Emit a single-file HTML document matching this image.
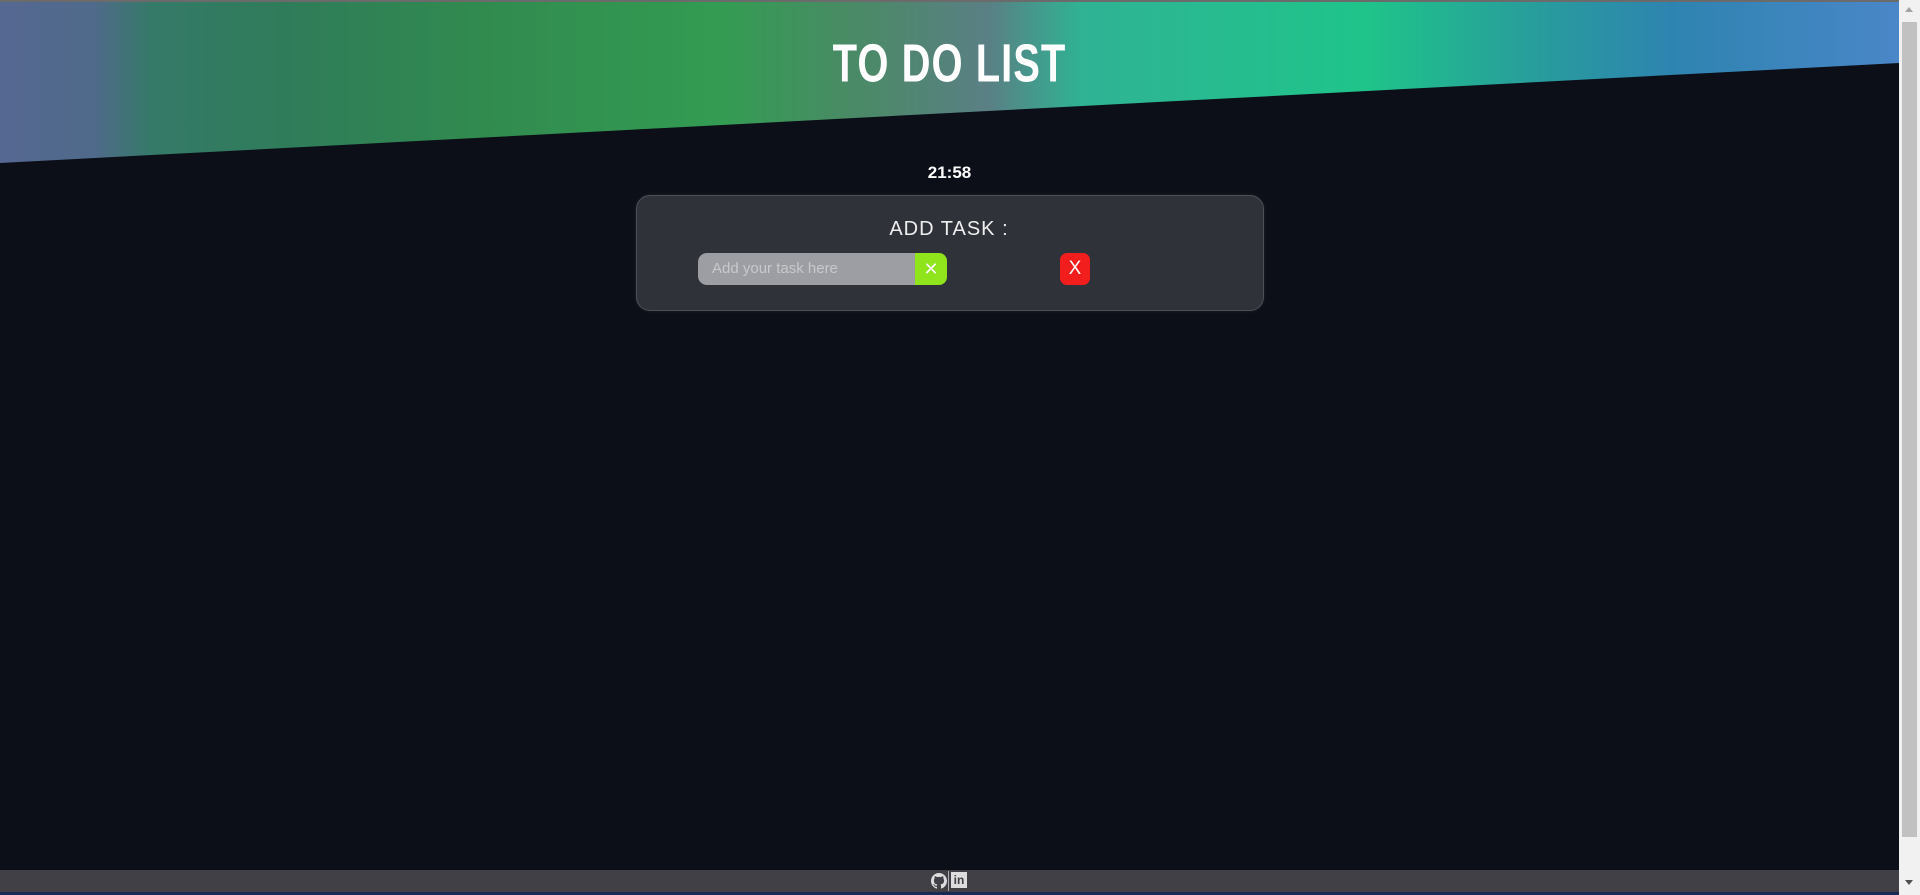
<!DOCTYPE html>
<html><head><style>
html,body{margin:0;padding:0;width:1920px;height:895px;overflow:hidden;background:#0c0f18;font-family:"Liberation Sans",sans-serif}
.hdr{position:absolute;left:0;top:0;width:1899px;height:170px;
background:linear-gradient(90deg,#556892 0%,#4f6a8a 5%,#357a68 8%,#2f7c5a 15%,#318a4f 25%,#339c52 38%,#4a8a66 45%,#5a7f84 52%,#2fb394 57%,#1fc48a 72%,#27a09a 80%,#2e84b0 88%,#4a86c8 100%);
clip-path:polygon(0 0,100% 0,100% 63px,0 163px)}
.topline{position:absolute;left:0;top:0;width:1920px;height:2px;background:#6b6b6b}
h1{position:absolute;top:42px;left:0;width:1899px;text-align:center;margin:0;color:#fff;font-size:40px;font-weight:bold;letter-spacing:1px;transform:scaleY(1.35)}
.time{position:absolute;top:163px;width:1899px;text-align:center;color:#fff;font-weight:bold;font-size:17px}
.card{position:absolute;left:636px;top:195px;width:626px;height:114px;background:#30323a;border:1px solid #4d4f57;border-radius:14px;box-shadow:0 0 4px rgba(255,255,255,.08)}
.add{position:absolute;top:218px;width:1898px;text-align:center;color:#eee;font-size:20px;letter-spacing:1px}
.inp{position:absolute;left:698px;top:253px;width:217px;height:32px;background:#9d9ea3;border-radius:9px 0 0 9px;color:#c8c9cc;font-size:15px;line-height:32px;padding-left:14px;box-sizing:border-box}
.gb{position:absolute;left:915px;top:253px;width:32px;height:32px;background:#8fe41b;border-radius:0 8px 8px 0;color:#fff;text-align:center;line-height:32px;font-size:18px}
.rb{position:absolute;left:1060px;top:253px;width:30px;height:32px;background:#f21d1d;border-radius:7px;color:#fff;text-align:center;line-height:32px;font-size:19px}
.sb{position:absolute;left:1899px;top:0;width:21px;height:895px;background:#f1f1f1}
.th{position:absolute;left:3px;top:22px;width:15px;height:815px;background:#c1c1c1}
.ar{position:absolute;left:6px;width:0;height:0;border-left:4px solid transparent;border-right:4px solid transparent}
.ft{position:absolute;left:0;top:870px;width:1899px;height:22px;background:#404046}
.bl{position:absolute;left:0;top:892px;width:1899px;height:3px;background:#1a2a55}
</style></head><body>
<div class="hdr"></div><div class="topline"></div>
<h1>TO DO LIST</h1>
<div class="time">21:58</div>
<div class="card"></div>
<div class="add">ADD TASK :</div>
<div class="inp">Add your task here</div>
<div class="gb">✕</div>
<div class="rb">X</div>
<div class="ft">
<svg style="position:absolute;left:931px;top:3px" width="16" height="16" viewBox="0 0 16 16"><path fill="#ddd" d="M8 0C3.6 0 0 3.6 0 8c0 3.5 2.3 6.5 5.5 7.6.4.1.5-.2.5-.4v-1.4c-2.2.5-2.700-1-2.7-1-.4-.9-.9-1.200-.9-1.2-.7-.5.1-.5.1-.5.8.1 1.2.8 1.2.8.7 1.2 1.9.9 2.3.7.1-.5.3-.9.5-1.1-1.8-.2-3.6-.9-3.6-4 0-.9.3-1.6.8-2.1-.1-.2-.4-1 .1-2.1 0 0 .7-.2 2.2.8a7.6 7.6 0 014 0c1.5-1 2.2-.8 2.2-.8.4 1.1.2 1.9.1 2.1.5.6.8 1.3.8 2.1 0 3.1-1.9 3.7-3.6 3.9.3.3.5.8.5 1.5v2.2c0 .2.1.5.6.4A8 8 0 0016 8c0-4.4-3.6-8-8-8z"/></svg>
<div style="position:absolute;left:948px;top:1px;width:1px;height:20px;background:#aaa"></div>
<div style="position:absolute;left:951px;top:2px;width:16px;height:16px;background:#ddd;color:#404046;font-size:12px;font-weight:bold;line-height:16px;text-align:center">in</div>
</div>
<div class="bl"></div>
<div class="sb"><div class="th"></div>
<div class="ar" style="top:7px;border-bottom:5px solid #a3a3a3"></div>
<div class="ar" style="top:880px;border-top:5px solid #505050"></div></div>
</body></html>
